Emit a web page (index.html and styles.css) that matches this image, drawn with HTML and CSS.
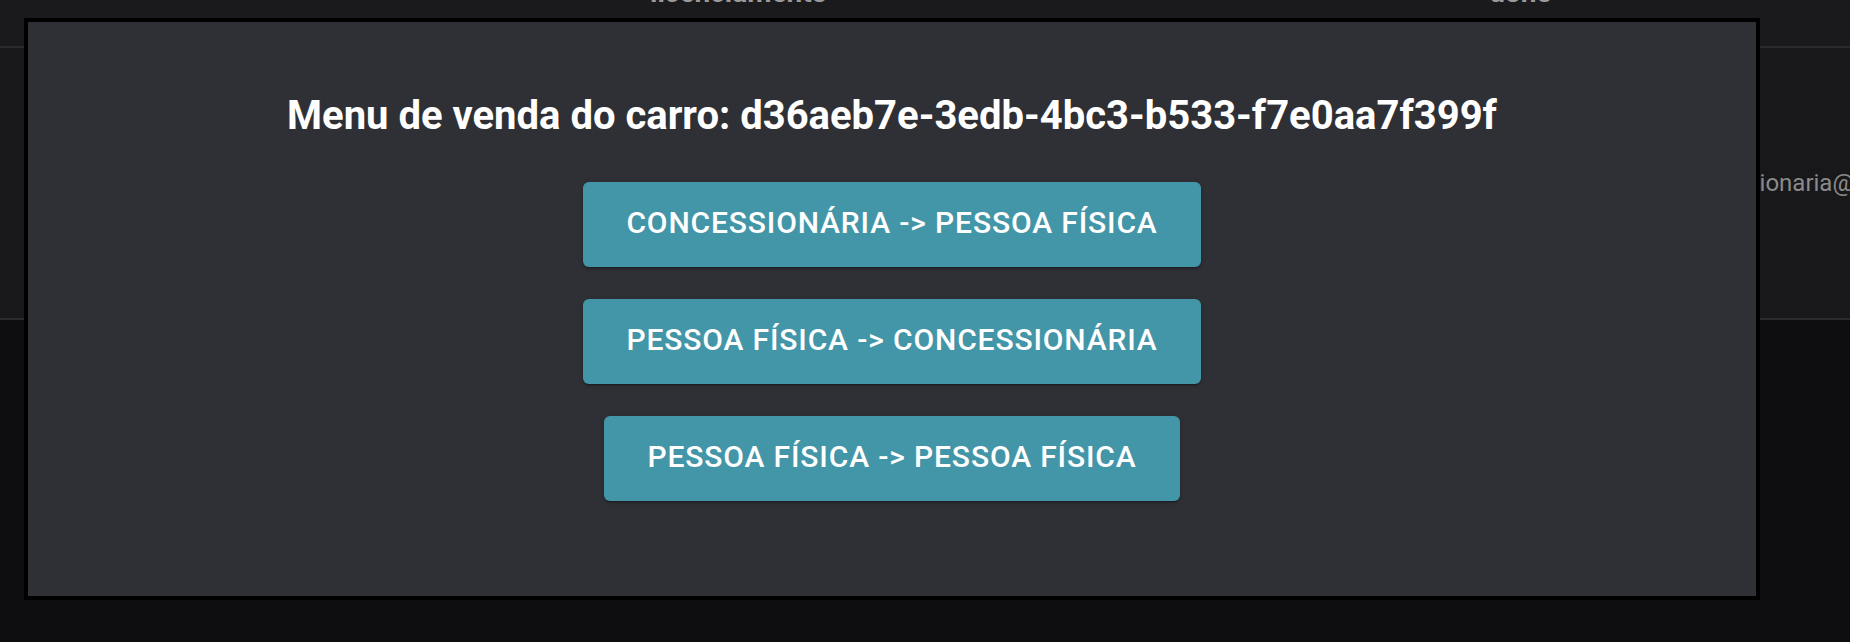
FILE: index.html
```html
<!DOCTYPE html>
<html lang="pt-BR">
<head>
<meta charset="utf-8">
<title>Menu de venda</title>
<link rel="stylesheet" href="styles.css">
</head>
<body>
<div class="page">
  <div class="table">
    <div class="thead">
      <div class="th th-lic">licenciamento</div>
      <div class="th th-dono">dono</div>
    </div>
    <div class="trow">
      <div class="td td-email">concessionaria@gmail.com</div>
    </div>
  </div>
</div>

<div class="modal">
  <h2 class="modal-title">Menu de venda do carro: d36aeb7e-3edb-4bc3-b533-f7e0aa7f399f</h2>
  <div class="actions">
    <button class="btn">CONCESSIONÁRIA -&gt; PESSOA FÍSICA</button>
    <button class="btn">PESSOA FÍSICA -&gt; CONCESSIONÁRIA</button>
    <button class="btn">PESSOA FÍSICA -&gt; PESSOA FÍSICA</button>
  </div>
</div>
</body>
</html>
```

FILE: styles.css
```css
* { box-sizing: border-box; }

html, body {
  margin: 0;
  padding: 0;
  width: 1850px;
  height: 642px;
  overflow: hidden;
  background: #0e0e10;
  font-family: Roboto, "Liberation Sans", sans-serif;
}

.page {
  position: relative;
  width: 1850px;
  height: 642px;
  overflow: hidden;
}

.table {
  display: flex;
  flex-direction: column;
}

.thead {
  height: 48px;
  background: #1a1a1c;
  border-bottom: 2px solid #2a2a2d;
  display: flex;
  align-items: flex-start;
  overflow: hidden;
}

.th {
  font-size: 28px;
  font-weight: 700;
  color: #9b9b9b;
  line-height: 28px;
  margin-top: -21px;
}

.th-lic { margin-left: 650px; }
.th-dono { margin-left: 662px; }

.trow {
  height: 272px;
  background: #18181a;
  border-bottom: 2px solid #2a2a2d;
  display: flex;
  align-items: flex-start;
}

.td {
  font-size: 24px;
  color: #8a8a8a;
  line-height: 28px;
}

.td-email {
  margin-left: 1670px;
  margin-top: 121px;
  white-space: nowrap;
}

.modal {
  position: absolute;
  left: 24px;
  top: 18px;
  width: 1736px;
  height: 582px;
  border: 4px solid #000;
  background: #2f3035;
  display: flex;
  flex-direction: column;
  align-items: center;
  padding-top: 70px;
}

.modal-title {
  margin: 0;
  font-size: 40px;
  font-weight: 700;
  line-height: 48px;
  color: #ffffff;
  text-align: center;
  white-space: nowrap;
}

.actions {
  margin-top: 42px;
  display: flex;
  flex-direction: column;
  align-items: center;
  gap: 32px;
}

.btn {
  height: 85px;
  padding: 0 43px 3px;
  border: none;
  border-radius: 6px;
  background: #4396a7;
  color: #ffffff;
  font-family: Roboto, "Liberation Sans", sans-serif;
  font-size: 30px;
  font-weight: 500;
  letter-spacing: 0.86px;
  line-height: 1;
  box-shadow: 0 3px 1px -2px rgba(0,0,0,.2), 0 2px 2px 0 rgba(0,0,0,.14), 0 1px 5px 0 rgba(0,0,0,.12);
  display: flex;
  align-items: center;
  justify-content: center;
}
```
